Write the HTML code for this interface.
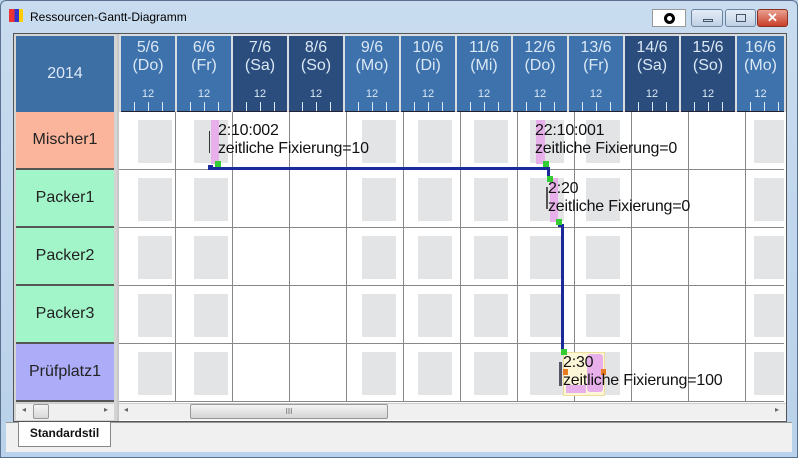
<!DOCTYPE html><html><head><meta charset="utf-8"><style>
*{margin:0;padding:0;box-sizing:border-box}
body{width:798px;height:458px;overflow:hidden;background:#bcd3ea;font-family:"Liberation Sans",sans-serif;position:relative}
.a{position:absolute}
.hd{position:absolute;top:36px;height:76px;width:54px;background:#3d72ac;color:#dbe8f5;text-align:center;font-size:16px;line-height:18px;padding-top:3px;border-bottom:1px solid #223}
.hd.we{background:#2b4d7e}
.hd b{font-weight:normal;position:absolute;left:0;right:0;top:49px;font-size:11px}
.lab{position:absolute;left:16px;width:98px;font-size:16px;color:#222;display:flex;align-items:center;justify-content:center;border-bottom:2px solid #555}
.g{position:absolute;background:#e2e4e6;width:34px;height:43px}
.tx{position:absolute;font-size:16px;color:#111;line-height:18px;white-space:nowrap;letter-spacing:-0.2px}
</style></head><body>
<div class="a" style="left:0;top:0;width:798px;height:458px;border:1px solid #5a7290;border-radius:6px 6px 0 0;background:linear-gradient(#c9dcef,#b9d1ea)"></div>
<div class="a" style="left:9px;top:9px;width:14px;height:13px;background:linear-gradient(90deg,#e33 0 40%,#33c 40% 70%,#fc0 70%)"></div>
<div class="a" style="left:30px;top:10px;font-size:12px;color:#000">Ressourcen-Gantt-Diagramm</div>
<div class="a" style="left:652px;top:9px;width:34px;height:18px;background:#fff;border:1px solid #999"><div class="a" style="left:11px;top:3px;width:11px;height:11px;border:3px solid #000;border-radius:50%"></div></div>
<div class="a" style="left:691px;top:9px;width:32px;height:18px;border:1px solid #6d84a0;border-radius:3px;background:linear-gradient(#e4edf7,#bfd0e4)"><div class="a" style="left:11px;top:9px;width:10px;height:3px;border:1px solid #456"></div></div>
<div class="a" style="left:725px;top:9px;width:31px;height:18px;border:1px solid #6d84a0;border-radius:3px;background:linear-gradient(#e4edf7,#bfd0e4)"><div class="a" style="left:10px;top:4px;width:10px;height:8px;border:1px solid #456"></div></div>
<div class="a" style="left:757px;top:9px;width:31px;height:18px;border:1px solid #8a3020;border-radius:3px;background:linear-gradient(#e9a090,#c8402a);color:#fff;font-size:13px;text-align:center;line-height:16px;font-weight:bold">✕</div>
<div class="a" style="left:13px;top:33px;width:774px;height:389px;background:#fff;border:1px solid #555"></div>
<div class="a" style="left:14px;top:34px;width:103px;height:387px;background:#d4d4d4"></div>
<div class="a" style="left:16px;top:36px;width:98px;height:76px;background:#3d6fa5;color:#dbe8f5;font-size:16px;text-align:center;line-height:76px">2014</div>
<div class="lab" style="top:112px;height:58px;background:#fbb59c">Mischer1</div>
<div class="lab" style="top:170px;height:58px;background:#a2f5c9">Packer1</div>
<div class="lab" style="top:228px;height:58px;background:#a2f5c9">Packer2</div>
<div class="lab" style="top:286px;height:58px;background:#a2f5c9">Packer3</div>
<div class="lab" style="top:344px;height:58px;background:#acacf9">Prüfplatz1</div>
<div class="a" style="left:117px;top:34px;width:2px;height:387px;background:#c8c8c8"></div>
<div class="a" style="left:119px;top:34px;width:667px;height:78px;background:#d9dde2"></div>
<div class="a" style="left:119px;top:112px;width:665px;height:290px;background:#fff;
background-image:repeating-linear-gradient(90deg,transparent 0 56px,#888 56px 57px),repeating-linear-gradient(180deg,transparent 0 57px,#888 57px 58px);background-position:0 0,0 0"></div>
<div class="hd" style="left:121px">5/6<br>(Do)<b>12</b></div>
<div class="hd" style="left:177px">6/6<br>(Fr)<b>12</b></div>
<div class="hd we" style="left:233px">7/6<br>(Sa)<b>12</b></div>
<div class="hd we" style="left:289px">8/6<br>(So)<b>12</b></div>
<div class="hd" style="left:345px">9/6<br>(Mo)<b>12</b></div>
<div class="hd" style="left:401px">10/6<br>(Di)<b>12</b></div>
<div class="hd" style="left:457px">11/6<br>(Mi)<b>12</b></div>
<div class="hd" style="left:513px">12/6<br>(Do)<b>12</b></div>
<div class="hd" style="left:569px">13/6<br>(Fr)<b>12</b></div>
<div class="hd we" style="left:625px">14/6<br>(Sa)<b>12</b></div>
<div class="hd we" style="left:681px">15/6<br>(So)<b>12</b></div>
<div class="hd" style="left:737px;width:47px">16/6<br>(Mo)<b>12</b></div>
<div class="a" style="left:121px;top:102px;width:663px;height:9px;background-image:repeating-linear-gradient(90deg,transparent 0 13px,#dbe8f5 13px 14px);"></div>
<div class="a" style="left:119px;top:34px;width:667px;height:78px;background-image:repeating-linear-gradient(90deg,#d9dde2 0 2px,transparent 2px 56px)"></div>
<div class="g" style="left:138px;top:120px"></div><div class="g" style="left:194px;top:120px"></div><div class="g" style="left:362px;top:120px"></div><div class="g" style="left:418px;top:120px"></div><div class="g" style="left:474px;top:120px"></div><div class="g" style="left:530px;top:120px"></div><div class="g" style="left:586px;top:120px"></div><div class="g" style="left:754px;top:120px;width:30px"></div>
<div class="g" style="left:138px;top:178px"></div><div class="g" style="left:194px;top:178px"></div><div class="g" style="left:362px;top:178px"></div><div class="g" style="left:418px;top:178px"></div><div class="g" style="left:474px;top:178px"></div><div class="g" style="left:530px;top:178px"></div><div class="g" style="left:586px;top:178px"></div><div class="g" style="left:754px;top:178px;width:30px"></div>
<div class="g" style="left:138px;top:236px"></div><div class="g" style="left:194px;top:236px"></div><div class="g" style="left:362px;top:236px"></div><div class="g" style="left:418px;top:236px"></div><div class="g" style="left:474px;top:236px"></div><div class="g" style="left:530px;top:236px"></div><div class="g" style="left:586px;top:236px"></div><div class="g" style="left:754px;top:236px;width:30px"></div>
<div class="g" style="left:138px;top:294px"></div><div class="g" style="left:194px;top:294px"></div><div class="g" style="left:362px;top:294px"></div><div class="g" style="left:418px;top:294px"></div><div class="g" style="left:474px;top:294px"></div><div class="g" style="left:530px;top:294px"></div><div class="g" style="left:586px;top:294px"></div><div class="g" style="left:754px;top:294px;width:30px"></div>
<div class="g" style="left:138px;top:352px"></div><div class="g" style="left:194px;top:352px"></div><div class="g" style="left:362px;top:352px"></div><div class="g" style="left:418px;top:352px"></div><div class="g" style="left:474px;top:352px"></div><div class="g" style="left:530px;top:352px"></div><div class="g" style="left:586px;top:352px"></div><div class="g" style="left:754px;top:352px;width:30px"></div>
<div class="a" style="left:211px;top:120px;width:8px;height:44px;background:#e8b0ea"></div>
<div class="a" style="left:209px;top:131px;width:1px;height:22px;background:#333"></div>
<div class="a" style="left:536px;top:120px;width:9px;height:44px;background:#e8b0ea"></div>
<div class="a" style="left:550px;top:178px;width:8px;height:44px;background:#e8b0ea"></div>
<div class="a" style="left:546px;top:187px;width:2px;height:22px;background:#555"></div>
<div class="a" style="left:563px;top:352px;width:42px;height:44px;background:#fdf7d8;border:1px solid #eedd99"></div>
<div class="a" style="left:566px;top:385px;width:20px;height:8px;background:#e8b0ea"></div>
<div class="a" style="left:587px;top:354px;width:16px;height:38px;background:#e8b0ea;border-radius:3px"></div>
<div class="a" style="left:559px;top:362px;width:3px;height:24px;background:#556"></div>
<div class="a" style="left:563px;top:369px;width:5px;height:6px;background:#e87a20"></div>
<div class="a" style="left:601px;top:369px;width:5px;height:6px;background:#e87a20"></div>
<div class="a" style="left:208px;top:167px;width:342px;height:3px;background:#1a2a9a"></div>
<div class="a" style="left:547px;top:167px;width:3px;height:10px;background:#1a2a9a"></div>
<div class="a" style="left:558px;top:224px;width:6px;height:3px;background:#1a2a9a"></div>
<div class="a" style="left:561px;top:224px;width:3px;height:126px;background:#1a2a9a"></div>
<div class="a" style="left:208px;top:165px;width:5px;height:5px;background:#1a2a9a"></div>
<div class="a" style="left:215px;top:161px;width:6px;height:6px;background:#3c3"></div>
<div class="a" style="left:543px;top:161px;width:6px;height:6px;background:#3c3"></div>
<div class="a" style="left:547px;top:176px;width:6px;height:6px;background:#3c3"></div>
<div class="a" style="left:556px;top:219px;width:6px;height:6px;background:#3c3"></div>
<div class="a" style="left:561px;top:349px;width:6px;height:6px;background:#3c3"></div>
<div class="tx" style="left:218px;top:122px">2:10:002<br>zeitliche Fixierung=10</div>
<div class="tx" style="left:535px;top:122px">22:10:001<br>zeitliche Fixierung=0</div>
<div class="tx" style="left:548px;top:180px">2:20<br>zeitliche Fixierung=0</div>
<div class="tx" style="left:563px;top:354px">2:30<br>zeitliche Fixierung=100</div>
<div class="a" style="left:16px;top:403px;width:98px;height:17px;background:#f0f0f0;border-top:1px solid #ccc"></div>
<div class="a" style="left:22px;top:405px;font-size:8px;color:#666">◂</div>
<div class="a" style="left:33px;top:404px;width:16px;height:15px;border:1px solid #999;border-radius:2px;background:linear-gradient(#f4f4f4,#d8d8d8)"></div>
<div class="a" style="left:104px;top:405px;font-size:8px;color:#666">▸</div>
<div class="a" style="left:119px;top:403px;width:667px;height:17px;background:#f0f0f0;border-top:1px solid #ccc"></div>
<div class="a" style="left:124px;top:405px;font-size:8px;color:#666">◂</div>
<div class="a" style="left:190px;top:404px;width:198px;height:15px;border:1px solid #999;border-radius:2px;background:linear-gradient(#f4f4f4,#d4d4d4);text-align:center;font-size:8px;color:#666;line-height:13px">III</div>
<div class="a" style="left:775px;top:405px;font-size:8px;color:#666">▸</div>
<div class="a" style="left:6px;top:422px;width:786px;height:30px;background:#f0f0f0;border-top:1px solid #999"></div>
<div class="a" style="left:18px;top:422px;width:93px;height:25px;background:#fff;border:1px solid #888;border-top:none;font-size:12px;font-weight:bold;text-align:center;line-height:22px;color:#111">Standardstil</div>
</body></html>
